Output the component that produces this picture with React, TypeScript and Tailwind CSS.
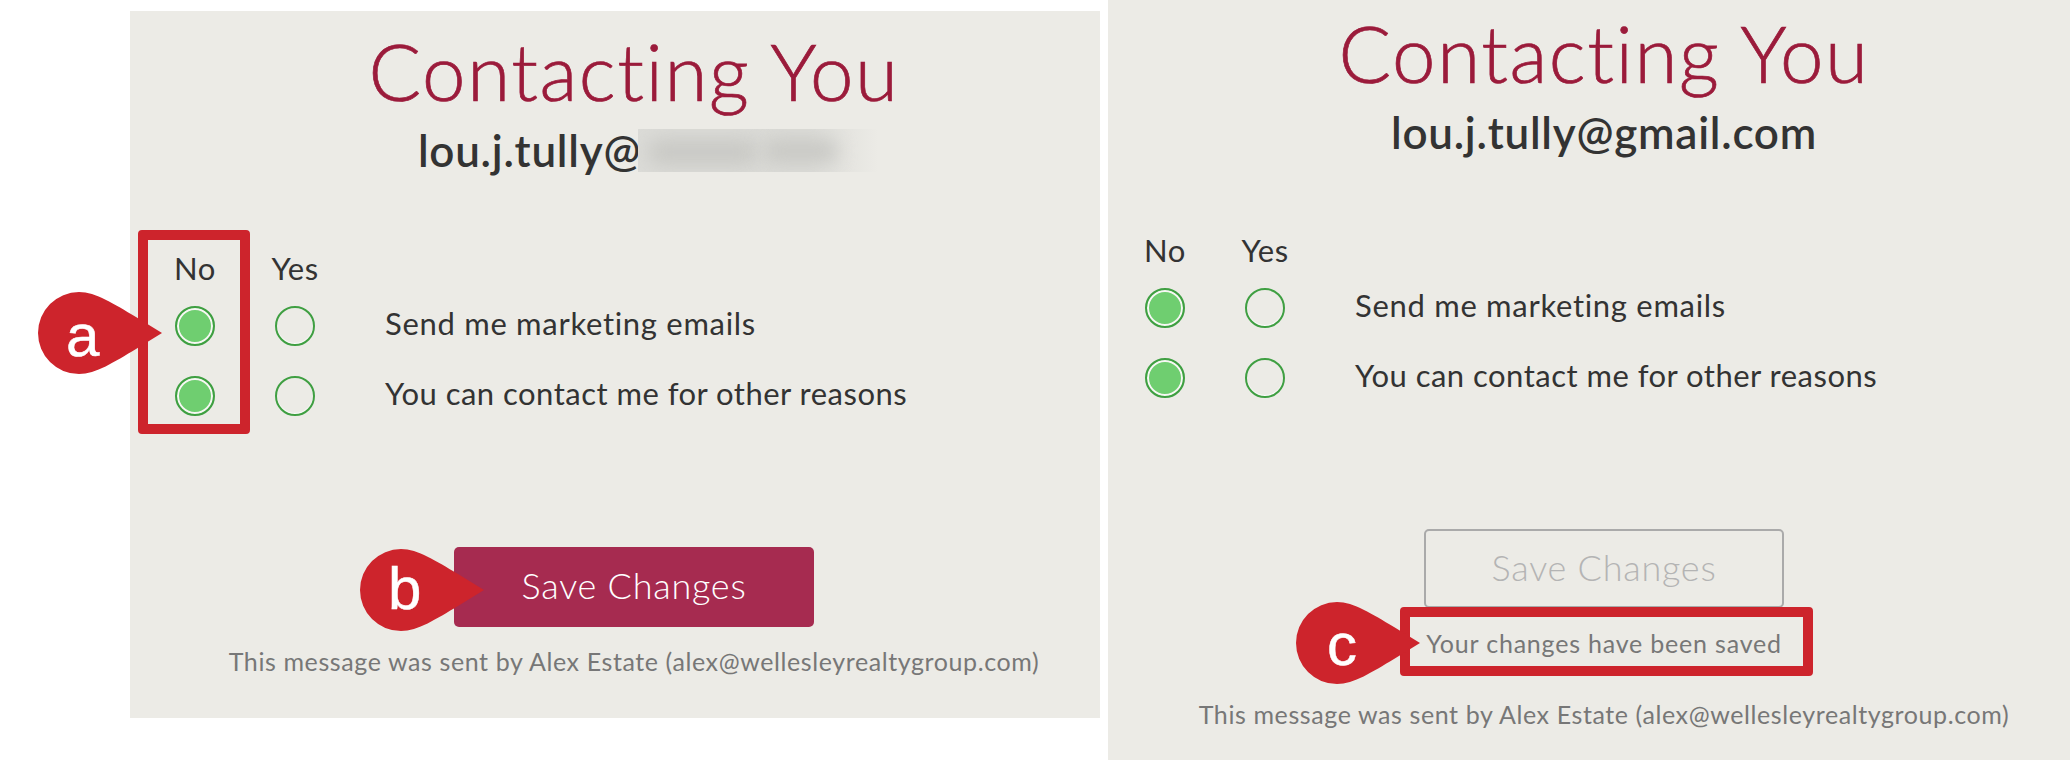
import type { ReactNode } from "react";

const FONT = "[font-family:Lato,'Open_Sans',sans-serif]";

function Callout({
  letter,
  className,
  letterClass,
}: {
  letter: string;
  className: string;
  letterClass: string;
}) {
  return (
    <div className={`absolute z-10 w-[124px] h-[82px] ${className}`}>
      <svg viewBox="0 0 124 82" className="w-full h-full block">
        <path
          d="M41 0C58 0 76 12 98 25L124 41L98 57C76 70 58 82 41 82A41 41 0 0 1 41 0Z"
          fill="#cd242c"
        />
      </svg>
      <span
        className={`absolute leading-none text-white text-[60px] [font-family:'Liberation_Sans',Arial,sans-serif] [-webkit-text-stroke:0.5px_white] ${letterClass}`}
      >
        {letter}
      </span>
    </div>
  );
}

function RedBox({ className }: { className: string }) {
  return (
    <div
      className={`absolute border-[10px] border-[#cd242c] rounded-[4px] ${className}`}
    />
  );
}

function Radio({ on }: { on?: boolean }) {
  return (
    <span
      className={`block w-10 h-10 rounded-full border-2 border-[#3f9f42] ${
        on
          ? "bg-[#6fce70] shadow-[inset_0_0_0_2px_#f7f7f4]"
          : "shadow-[inset_0_-1px_1px_#ffffff]"
      }`}
    />
  );
}

function OptionRow({ label, spacing }: { label: string; spacing: string }) {
  return (
    <>
      <div className="h-[70px] flex items-center justify-center">
        <Radio on />
      </div>
      <div className="h-[70px] flex items-center justify-center">
        <Radio />
      </div>
      <div
        className={`h-[70px] flex items-center pl-[17px] pb-1.5 text-[31px] text-[#333333] ${spacing}`}
      >
        {label}
      </div>
    </>
  );
}

function Card({
  email,
  button,
  children,
}: {
  email: ReactNode;
  button: ReactNode;
  children?: ReactNode;
}) {
  return (
    <div className={`w-[932px] ${FONT}`}>
      <h1 className="h-[100px] mt-[3px] flex items-center justify-center text-[78px] font-light tracking-[1.6px] text-[#9b1b3b] [-webkit-text-stroke:0.7px_#9b1b3b]">
        Contacting You
      </h1>
      <div className="h-[50px] mt-[4px] flex items-center justify-center text-[44px] font-semibold tracking-[0.75px] text-[#333333]">
        {email}
      </div>
      <div className="mt-[71px] grid grid-cols-[54px_54px_1fr] gap-x-[46px] [&>div]:whitespace-nowrap">
        <div className="h-[45px] flex items-center justify-center text-[31px] tracking-[0.5px] text-[#333333]">
          No
        </div>
        <div className="h-[45px] flex items-center justify-center text-[31px] tracking-[0.5px] text-[#333333] -mx-5">
          Yes
        </div>
        <div className="h-[45px]" />
        <div className="col-span-3 grid grid-cols-subgrid">
          <OptionRow
            label="Send me marketing emails"
            spacing="tracking-[0.7px]"
          />
          <OptionRow
            label="You can contact me for other reasons"
            spacing="tracking-[0.48px]"
          />
        </div>
      </div>
      <div className="mt-[116px] flex justify-center">{button}</div>
      {children}
      <p className="mt-[17px] h-[36px] flex items-center justify-center text-[25px] tracking-[0.6px] text-[#777777] whitespace-nowrap">
        This message was sent by Alex Estate (alex@wellesleyrealtygroup.com)
      </p>
    </div>
  );
}

function Redacted() {
  return (
    <span className="relative inline-block w-[209px] h-[43px]">
      <span className="absolute left-[-3px] top-0 w-[240px] h-[43px] overflow-hidden bg-linear-to-r from-[#dbdbd7] via-[#dbdbd7] via-70% to-[#ecebe6]">
        <span className="absolute left-[10px] top-[10px] w-[110px] h-[26px] rounded-full bg-[#c9c9c5] blur-[9px]" />
        <span className="absolute left-[125px] top-[10px] w-[75px] h-[24px] rounded-full bg-[#c9c9c5] blur-[9px]" />
      </span>
    </span>
  );
}

export default function App() {
  return (
    <div className="w-[2070px] h-[760px] bg-white flex items-start gap-[8px] overflow-hidden">
      <section className="relative ml-[130px] mt-[11px] w-[970px] h-[707px] shrink-0 bg-[#ecebe6] pl-[38px] pt-[7px]">
        <Card
          email={
            <>
              lou.j.tully@
              <Redacted />
            </>
          }
          button={
            <button className="w-[360px] h-[80px] rounded-[5px] bg-[#a62b50] text-white text-[36px] font-light tracking-[0.75px] pb-1">
              Save Changes
            </button>
          }
        />
        <RedBox className="left-[8px] top-[219px] w-[112px] h-[204px]" />
        <Callout
          letter="a"
          className="left-[-92px] top-[281px]"
          letterClass="left-[28px] top-[14px]"
        />
        <Callout
          letter="b"
          className="left-[230px] top-[538px]"
          letterClass="left-[28px] top-[10px]"
        />
      </section>
      <section className="relative w-[962px] h-[760px] shrink-0 bg-[#ecebe6] pl-[30px]">
        <Card
          email="lou.j.tully@gmail.com"
          button={
            <button className="w-[360px] h-[79px] rounded-[5px] border-2 border-[#aaaaaa] text-[#b4b4b4] text-[36px] font-light tracking-[0.75px] pb-1">
              Save Changes
            </button>
          }
        >
          <div className="h-[72px] flex items-center justify-center text-[25px] tracking-[0.8px] text-[#777777]">
            Your changes have been saved
          </div>
        </Card>
        <RedBox className="left-[292px] top-[607px] w-[413px] h-[69px]" />
        <Callout
          letter="c"
          className="left-[188px] top-[602px]"
          letterClass="left-[31px] top-[13px]"
        />
      </section>
    </div>
  );
}
